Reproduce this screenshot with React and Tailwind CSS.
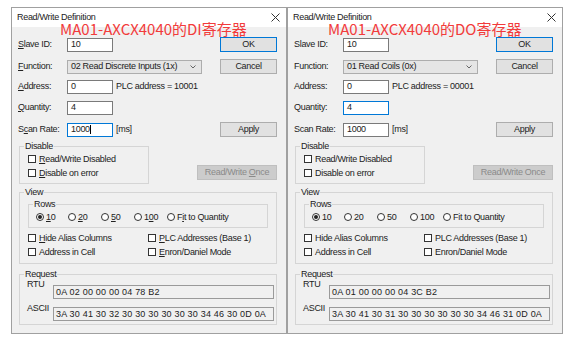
import React from "react";

// underlined access key, only drawn when the dialog shows keyboard cues
function Acc({ text, k, on }) {
  if (!on || k < 0) return <span>{text}</span>;
  return (
    <span className="whitespace-pre">
      {text.slice(0, k)}
      <span className="underline underline-offset-[1px]">{text[k]}</span>
      {text.slice(k + 1)}
    </span>
  );
}

function Field({ value, focus, caret }) {
  return (
    <div
      className={`w-[46px] h-[14px] bg-white border flex items-center pl-[3px] ${
        focus ? "border-[#0078d7]" : "border-[#7a7a7a]"
      }`}
    >
      <span>{value}</span>
      {caret && <span className="w-px h-[9px] bg-black" />}
    </div>
  );
}

function Btn({ children, wide, def, disabled }) {
  let cls = "border-[#adadad] bg-[#e1e1e1]";
  if (def) cls = "border-[#0078d7] bg-[#e1e1e1]";
  if (disabled) cls = "border-[#bfbfbf] bg-[#cccccc] text-[#8a8a8a]";
  return (
    <div
      className={`${wide ? "w-[80px]" : "w-[57px]"} h-[15px] flex items-center justify-center border ${cls}`}
    >
      {children}
    </div>
  );
}

function Check({ children }) {
  return (
    <div className="flex items-center h-[14px]">
      <span className="w-[8px] h-[8px] border border-[#333] bg-white" />
      <span className="ml-[3px]">{children}</span>
    </div>
  );
}

function Radio({ checked, children, w }) {
  return (
    <div className={`flex items-center ${w}`}>
      <span className="w-[8px] h-[8px] rounded-full border border-[#333] bg-white flex items-center justify-center">
        {checked && <span className="w-[4px] h-[4px] rounded-full bg-[#222]" />}
      </span>
      <span className="ml-[2px]">{children}</span>
    </div>
  );
}

function Group({ title, className, children }) {
  return (
    <fieldset className={`border border-[#d5d5d5] ${className}`}>
      <legend className="ml-[4px] px-[1px] leading-[11px]">{title}</legend>
      {children}
    </fieldset>
  );
}

function Dialog({ note, noteLeft, fn, plc, rtu, ascii, focus, keys }) {
  return (
    <div className="relative w-[276px] h-[327px] border border-[#a0a0a0] bg-[#f0f0f0] flex flex-col">
      {/* Title bar */}
      <div className="h-[19px] bg-white flex items-center justify-between pl-[5px] pr-[6px]">
        <span className="leading-[9px]">Read/Write Definition</span>
        <svg width="9" height="9" viewBox="0 0 9 9" stroke="#333" strokeWidth="1">
          <path d="M0.5 0.5 L8.5 8.5 M8.5 0.5 L0.5 8.5" />
        </svg>
      </div>

      {/* Red annotation over the dialog */}
      <div
        className={`absolute top-[15px] ${noteLeft} text-[15px] leading-[12px] tracking-normal text-[#f23b3b] font-['Noto_Sans_CJK_SC',sans-serif]`}
      >
        {note}
      </div>

      <div className="flex flex-col pl-[6px] pr-[9px] pt-[10px]">
        <div className="flex items-center h-[15px]">
          <span className="w-[49px]">
            <Acc text="Slave ID:" k={0} on={keys} />
          </span>
          <Field value="10" />
          <div className="ml-auto">
            <Btn def>OK</Btn>
          </div>
        </div>

        <div className="flex items-center h-[15px] mt-[7px]">
          <span className="w-[49px]">
            <Acc text="Function:" k={0} on={keys} />
          </span>
          <div className="w-[135px] h-[14px] bg-[#e5e5e5] border border-[#adadad] flex items-center justify-between pl-[3px] pr-[5px]">
            <span>{fn}</span>
            <svg width="6" height="4" viewBox="0 0 6 4" fill="none" stroke="#555" strokeWidth="0.9">
              <path d="M0.5 0.5 L3 3 L5.5 0.5" />
            </svg>
          </div>
          <div className="ml-auto">
            <Btn>Cancel</Btn>
          </div>
        </div>

        <div className="flex items-center h-[15px] mt-[5px]">
          <span className="w-[49px]">
            <Acc text="Address:" k={0} on={keys} />
          </span>
          <Field value="0" />
          <span className="ml-[3px]">PLC address = {plc}</span>
        </div>

        <div className="flex items-center h-[15px] mt-[6px]">
          <span className="w-[49px]">
            <Acc text="Quantity:" k={0} on={keys} />
          </span>
          <Field value="4" focus={focus === "quantity"} />
        </div>

        <div className="flex items-center h-[15px] mt-[7px]">
          <span className="w-[49px]">
            <Acc text="Scan Rate:" k={1} on={keys} />
          </span>
          <Field value="1000" focus={focus === "scan"} caret={focus === "scan"} />
          <span className="ml-[3px]">[ms]</span>
          <div className="ml-auto">
            <Btn>Apply</Btn>
          </div>
        </div>

        {/* Disable + Read/Write Once */}
        <div className="flex items-end mt-[4px]">
          <Group title="Disable" className="ml-[1px] w-[130px]">
            <div className="pl-[8px] pb-[3px]">
              <Check>
                <Acc text="Read/Write Disabled" k={0} on={keys} />
              </Check>
              <Check>
                <Acc text="Disable on error" k={0} on={keys} />
              </Check>
            </div>
          </Group>
          <div className="ml-auto mb-[4px]">
            <Btn wide disabled>
              <Acc text="Read/Write Once" k={11} on={keys} />
            </Btn>
          </div>
        </div>

        {/* View */}
        <Group title="View" className="ml-[1px] mt-[3px]">
          <Group title="Rows" className="mx-[8px] mt-[1px]">
            <div className="flex items-center h-[14px] pl-[7px] pb-[3px] box-content">
              <Radio checked w="w-[32px]">
                <Acc text="10" k={0} on={keys} />
              </Radio>
              <Radio w="w-[33px]">
                <Acc text="20" k={0} on={keys} />
              </Radio>
              <Radio w="w-[33px]">
                <Acc text="50" k={0} on={keys} />
              </Radio>
              <Radio w="w-[33px]">
                <Acc text="100" k={1} on={keys} />
              </Radio>
              <Radio>
                <Acc text="Fit to Quantity" k={1} on={keys} />
              </Radio>
            </div>
          </Group>
          <div className="grid grid-cols-[120px_1fr] pl-[8px] pt-[3px] pb-[4px]">
            <Check>
              <Acc text="Hide Alias Columns" k={0} on={keys} />
            </Check>
            <Check>
              <Acc text="PLC Addresses (Base 1)" k={0} on={keys} />
            </Check>
            <Check>Address in Cell</Check>
            <Check>
              <Acc text="Enron/Daniel Mode" k={0} on={keys} />
            </Check>
          </div>
        </Group>

        {/* Request */}
        <Group title="Request" className="ml-[1px] mt-[5px]">
          <div className="flex flex-col gap-[8px] pl-[7px] pr-[2px] pt-[5px] pb-[3px]">
            <div className="flex items-start">
              <span className="w-[26px] leading-[11px] -mt-[6px]">RTU</span>
              <div className="flex-1 h-[14px] bg-[#f0f0f0] border border-[#9a9a9a] flex items-center pl-[2px] tracking-[0.2px]">
                {rtu}
              </div>
            </div>
            <div className="flex items-start">
              <span className="w-[26px] leading-[11px] -mt-[4px]">ASCII</span>
              <div className="flex-1 h-[14px] bg-[#f0f0f0] border border-[#9a9a9a] flex items-center pl-[2px] tracking-[0.2px]">
                {ascii}
              </div>
            </div>
          </div>
        </Group>
      </div>
    </div>
  );
}

export default function App() {
  return (
    <div className="w-[571px] h-[343px] bg-white flex pt-[7px] pl-[11px] text-[9px] leading-[11px] tracking-[-0.3px] text-[#222] font-['Liberation_Sans',sans-serif]">
      <Dialog
        note="MA01-AXCX4040的DI寄存器"
        noteLeft="left-[48px]"
        fn="02 Read Discrete Inputs (1x)"
        plc="10001"
        rtu="0A 02 00 00 00 04 78 B2"
        ascii="3A 30 41 30 32 30 30 30 30 30 30 34 46 30 0D 0A"
        focus="scan"
        keys
      />
      <Dialog
        note="MA01-AXCX4040的DO寄存器"
        noteLeft="left-[40px]"
        fn="01 Read Coils (0x)"
        plc="00001"
        rtu="0A 01 00 00 00 04 3C B2"
        ascii="3A 30 41 30 31 30 30 30 30 30 30 34 46 31 0D 0A"
        focus="quantity"
      />
    </div>
  );
}
